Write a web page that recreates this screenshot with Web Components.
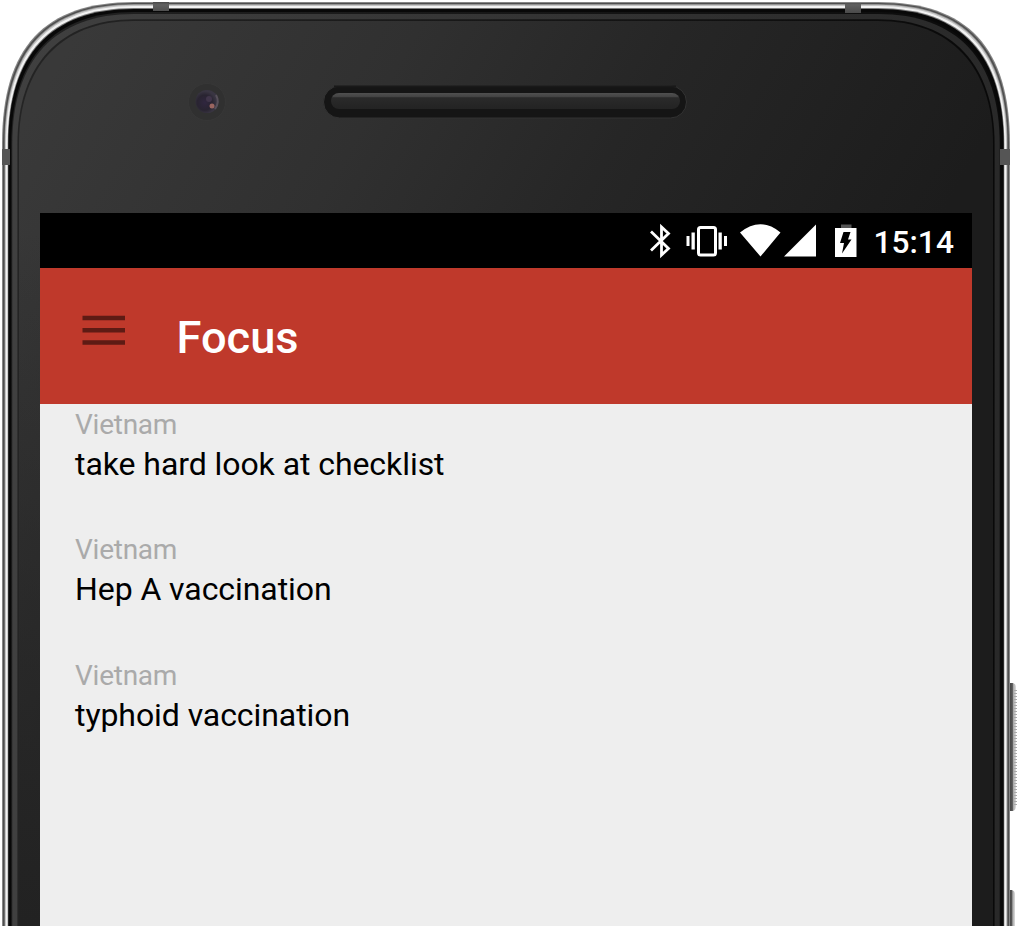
<!DOCTYPE html>
<html lang="en">
<head>
<meta charset="utf-8">
<title>Focus</title>
<style>
html,body{margin:0;height:100%;overflow:hidden;background:#fff;font-family:Roboto,sans-serif}
</style>
</head>
<body>
<phone-frame>
  <status-bar time="15:14"></status-bar>
  <app-bar>Focus</app-bar>
  <task-list>
    <task-item project="Vietnam">take hard look at checklist</task-item>
    <task-item project="Vietnam">Hep A vaccination</task-item>
    <task-item project="Vietnam">typhoid vaccination</task-item>
  </task-list>
</phone-frame>
<script>
class Base extends HTMLElement {
  constructor() {
    super();
    this.attachShadow({ mode: 'open' }).innerHTML = this.view();
  }
}

customElements.define('phone-frame', class extends Base {
  // Outline of the handset, moved inwards by i pixels; inner corners get rounder.
  outline(i, top = i) {
    const l = 2 + i, r = 1010 - i, t = 2 + top, k = 0.32 + i * 0.003;
    const y = 144, h = y - t, w = 132 - i;
    return `M${l} 940V${y}C${l} ${t + h * k} ${l + w * k} ${t} ${l + w} ${t}H${r - w}C${r - w * k} ${t} ${r} ${t + h * k} ${r} ${y}V940Z`;
  }
  view() {
    const layers = [
      [0, 0, '#858585'], [1, 1, '#4e4e4e'], [2.4, 2, '#858585'], [3, 2.8, '#c4c4c4'], [4, 4, '#f2f2f2'],
      [5.7, 6, '#777'], [6.3, 7, '#080808'], [9.3, 10, 'url(#rim)'], [10.3, 12, 'url(#rim2)'],
      [15.4, 17.2, 'url(#groove)'], [17, 19, 'url(#glass)']
    ].map(([i, t, f]) => `<path d="${this.outline(i, t)}" fill="${f}"/>`).join('');
    return `<style>
      :host{display:block;position:relative;width:1018px;height:926px;overflow:hidden}
      svg{position:absolute;inset:0;display:block}
      .screen{position:relative;box-sizing:border-box;height:100%;padding:213px 46px 0 40px;display:flex;flex-direction:column}
    </style>
    <svg width="1018" height="926" viewBox="0 0 1018 926">
      <defs>
        <linearGradient id="glass" gradientUnits="userSpaceOnUse" x1="60" y1="60" x2="790" y2="480">
          <stop offset="0" stop-color="#393939"/><stop offset=".35" stop-color="#303030"/><stop offset=".62" stop-color="#262626"/><stop offset="1" stop-color="#1c1c1c"/>
        </linearGradient>
        <linearGradient id="shade" x1="0" y1="0" x2="0" y2="1"><stop offset="0" stop-color="#242424" stop-opacity="0"/><stop offset="1" stop-color="#222"/></linearGradient>
        <linearGradient id="rim" x1="0" x2="1"><stop offset="0" stop-color="#222"/><stop offset="1" stop-color="#0b0b0b"/></linearGradient>
        <linearGradient id="rim2" x1="0" x2="1"><stop offset="0" stop-color="#404040"/><stop offset="1" stop-color="#292929"/></linearGradient>
        <linearGradient id="groove" x1="0" x2="1"><stop offset="0" stop-color="#242424"/><stop offset="1" stop-color="#090909"/></linearGradient>
        <linearGradient id="slot" x1="0" y1="0" x2="0" y2="1"><stop offset="0" stop-color="#505050"/><stop offset=".22" stop-color="#444"/><stop offset=".3" stop-color="#2a2a2a"/><stop offset="1" stop-color="#232323"/></linearGradient>
        <linearGradient id="band" x1="0" y1="0" x2="0" y2="1"><stop offset="0" stop-color="#484848"/><stop offset=".25" stop-color="#606060"/><stop offset="1" stop-color="#4a4a4a"/></linearGradient>
        <linearGradient id="key" x1="0" x2="1"><stop offset="0" stop-color="#444"/><stop offset=".48" stop-color="#555"/><stop offset=".62" stop-color="#a8a8a8"/><stop offset="1" stop-color="#dedede"/></linearGradient>
        <radialGradient id="lens" cx=".4" cy=".55"><stop offset="0" stop-color="#30263f"/><stop offset=".65" stop-color="#292431"/><stop offset="1" stop-color="#393542"/></radialGradient>
        <pattern id="knurl" width="4" height="3" patternUnits="userSpaceOnUse"><path d="M0 .5h4" stroke="#aaa"/></pattern>
      </defs>
      <path d="M1009 683h4q3 1 3 4v119q0 4-3 5h-4z" fill="url(#key)"/>
      <path d="M1014 688h3v118h-3z" fill="url(#knurl)"/>
      <path d="M1009 890h3q3 1 3 4v32h-6z" fill="url(#key)"/>
      ${layers}
      <path d="M19 230h21v696H19z" fill="url(#shade)"/>
      <path d="M153 2h16v9h-16zM845 3h16v10h-16z" fill="url(#band)"/>
      <path d="M2 149h8v16H2zM1000 149h10v16h-10z" fill="#555"/>
      <circle cx="207" cy="102" r="18.5" fill="#303030" stroke="#373737"/>
      <circle cx="207" cy="101.500" r="11.500" fill="url(#lens)"/>
      <path d="M216 95q4 7-1 14" fill="none" stroke="#57505a" stroke-width="2"/>
      <circle cx="212" cy="106" r="2.500" fill="#9a6560"/><circle cx="209" cy="99" r="3" fill="#40354a"/>
      <rect x="323.500" y="86" width="363" height="32" rx="16" fill="#151515" stroke="#333" stroke-width="1"/>
      <path d="M334 86.500H676" stroke="#191919" stroke-width="2"/>
      <rect x="331" y="93" width="349" height="16" rx="8" fill="url(#slot)"/>
    </svg>
    <div class="screen"><slot></slot></div>`;
  }
});

customElements.define('status-bar', class extends Base {
  view() {
    return `<style>
      :host{display:flex;box-sizing:border-box;height:55px;flex:none;background:#000;color:#fff;justify-content:flex-end;padding-right:18.500px}
      svg{display:block;flex:none}
      time{font-size:31.700px;font-weight:500;line-height:37px;margin-top:11px;width:80px;white-space:nowrap}
    </style>
    <svg width="227.500" height="55" viewBox="646 213 227.500 55" fill="#fff">
      <path d="M651 231.500L668.500 248.500L661.500 255V227L668.500 233.500L651 250.500" fill="none" stroke="#fff" stroke-width="2.800"/>
      <rect x="698.500" y="227.500" width="17" height="27.500" rx="2" fill="none" stroke="#fff" stroke-width="3"/>
      <path d="M691.500 232.500h3.300v17h-3.300zM686.500 236h3v10h-3zM718.500 232.500h3.300v17h-3.300zM724 236h3v10h-3zM740 232.500Q760.500 216 780.500 232.500L760.500 256.500zM784 256.500L816 224.500V256.500z"/>
      <path d="M841 224.500h10.500v4H841z" fill="#555"/><path d="M835 228h21.500v29H835z"/>
      <path d="M843.500 232h7l-2.500 7.500h3.500L842 253.500l2-10.500h-4z" fill="#000"/>
    </svg>
    <time></time>`;
  }
  connectedCallback() { this.shadowRoot.querySelector('time').textContent = this.getAttribute('time'); }
});

customElements.define('app-bar', class extends Base {
  view() {
    return `<style>
      :host{display:flex;box-sizing:border-box;height:136px;flex:none;background:#bf392b;color:#fff;padding-left:42px}
      svg{display:block;margin-top:47px;flex:none}
      h1{font-size:45.200px;font-weight:500;line-height:54px;margin:43px 0 0 51.500px}
    </style>
    <svg width="43" height="32" viewBox="0 0 43 32"><path d="M.5 3H43M.5 15.300H43M.5 27.500H43" stroke="#5e1b14" stroke-width="4.400"/></svg>
    <h1><slot></slot></h1>`;
  }
});

customElements.define('task-list', class extends Base {
  view() {
    return `<style>:host{display:flex;flex-direction:column;gap:45.400px;flex:1;background:#eee;padding:0 35px;box-sizing:border-box}</style><slot></slot>`;
  }
});

customElements.define('task-item', class extends Base {
  view() {
    return `<style>
      :host{display:block;height:80px;white-space:nowrap}
      small{display:block;font-size:28px;line-height:39px;padding-top:1px;letter-spacing:-.25px;color:#aaa}
      p{margin:0;font-size:32px;line-height:40px;letter-spacing:-.07px;color:#000}
    </style><small></small><p><slot></slot></p>`;
  }
  connectedCallback() { this.shadowRoot.querySelector('small').textContent = this.getAttribute('project'); }
});
</script>
</body>
</html>
